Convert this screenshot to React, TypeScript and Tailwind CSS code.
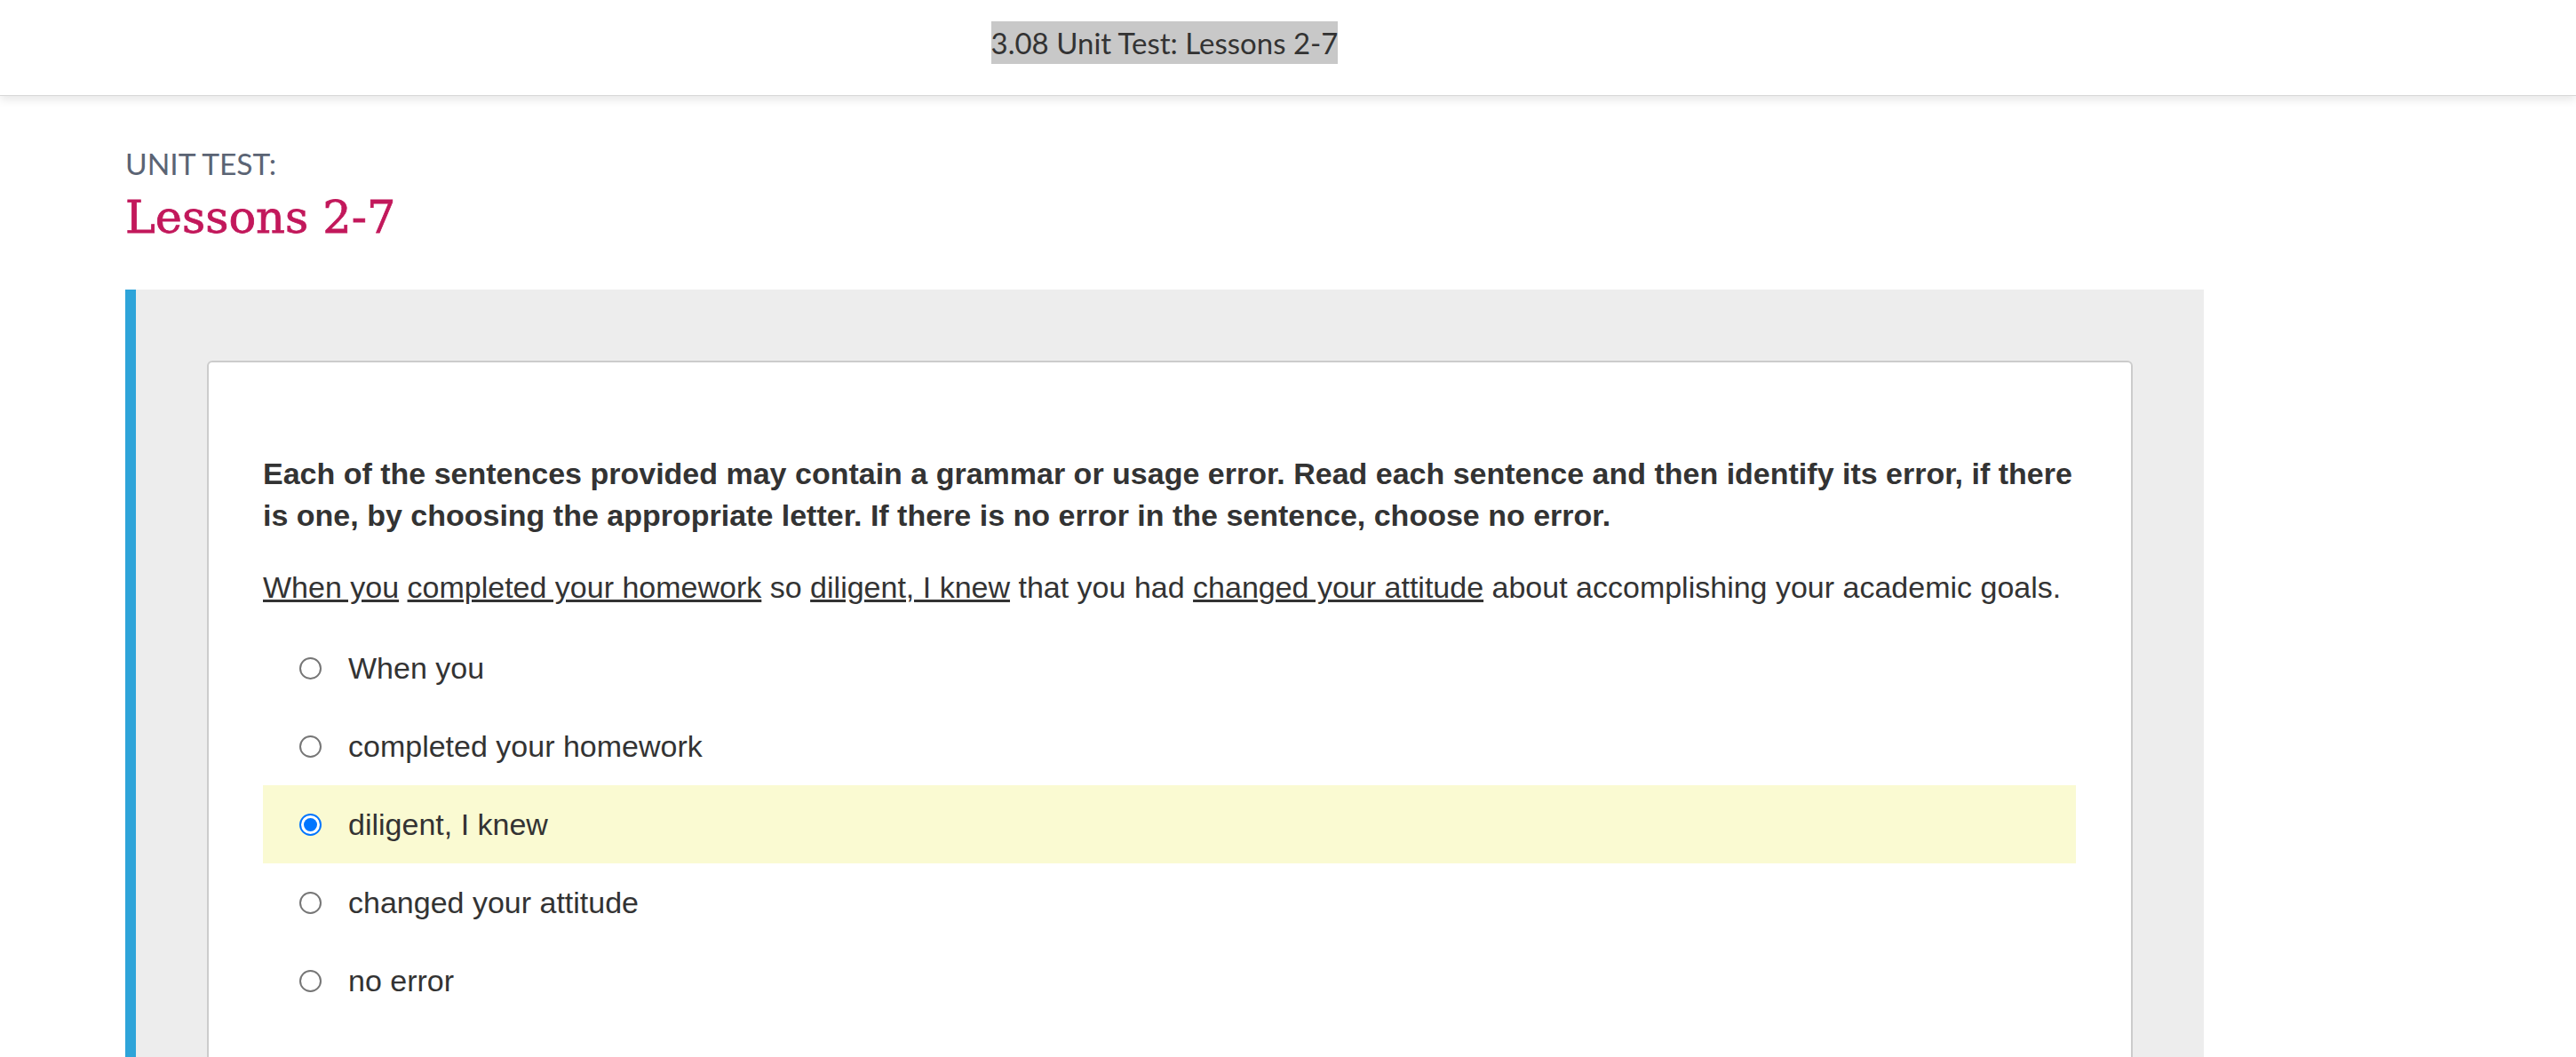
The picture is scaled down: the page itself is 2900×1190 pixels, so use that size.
import React from "react"

const options = ["When you", "completed your homework", "diligent, I knew", "changed your attitude", "no error"]

function Radio({ checked }: { checked: boolean }) {
    if (checked) {
        return (
            <div className="w-[25px] h-[25px] rounded-full border-2 border-[#0075ff] bg-white flex items-center justify-center shrink-0">
                <div className="w-[15px] h-[15px] rounded-full bg-[#0075ff]" />
            </div>
        )
    }
    return <div className="w-[25px] h-[25px] rounded-full border-2 border-[#767676] bg-white shrink-0" />
}

function Option({ text, checked }: { text: string; checked: boolean }) {
    return (
        <div className={`h-[88px] flex items-center pl-[41px] gap-[30px] ${checked ? "bg-[#fafad2]" : ""}`}>
            <Radio checked={checked} />
            <span className="text-[34px] text-[#333]">{text}</span>
        </div>
    )
}

export default function App() {
    return (
        <div className="min-h-screen bg-white" style={{ fontFamily: "'Liberation Sans', Arial, sans-serif" }}>
            <header className="relative z-10 h-[108px] bg-white border-b border-[#d8d8d8] shadow-[0_4px_10px_rgba(0,0,0,0.1)]">
                <div className="ml-[141px] w-[2340px] pt-[24px] text-center">
                    <span className="inline-block bg-[#c8c8c8] text-[#333] text-[33px] leading-[48px]" style={{ fontFamily: "Lato, sans-serif" }}>
                        3.08 Unit Test: Lessons 2-7
                    </span>
                </div>
            </header>

            <main className="ml-[141px] w-[2340px]">
                <div className="pt-[56px]">
                    <div className="text-[33.6px] leading-[40px] text-[#5b6474]" style={{ fontFamily: "Lato, sans-serif" }}>
                        UNIT TEST:
                    </div>
                    <h1 className="mt-[11px] text-[51px] leading-[60px] text-[#c2185b] [-webkit-text-stroke:0.8px_#c2185b]" style={{ fontFamily: "'DejaVu Serif', serif" }}>
                        Lessons 2-7
                    </h1>
                </div>

                <section className="mt-[51px] bg-[#ededed] border-l-[12px] border-[#2ea4d9] p-[80px]">
                    <div className="bg-white border-2 border-[#cccccc] rounded-[6px] pl-[61px] pr-[62px] pt-[102px] pb-[120px]">
                        <p className="font-bold text-[34px] leading-[47px] text-[#333]">
                            Each of the sentences provided may contain a grammar or usage error. Read each sentence and then identify its error, if there is one, by choosing the appropriate letter. If there is no error in the sentence, choose no error.
                        </p>
                        <p className="mt-[34px] text-[34px] leading-[47px] text-[#333]">
                            <span className="underline">When you</span> <span className="underline">completed your homework</span> so{" "}
                            <span className="underline">diligent, I knew</span> that you had <span className="underline">changed your attitude</span> about accomplishing your academic goals.
                        </p>
                        <div className="mt-[23px]">
                            {options.map((o, i) => (
                                <Option key={o} text={o} checked={i === 2} />
                            ))}
                        </div>
                    </div>
                </section>
            </main>
        </div>
    )
}
